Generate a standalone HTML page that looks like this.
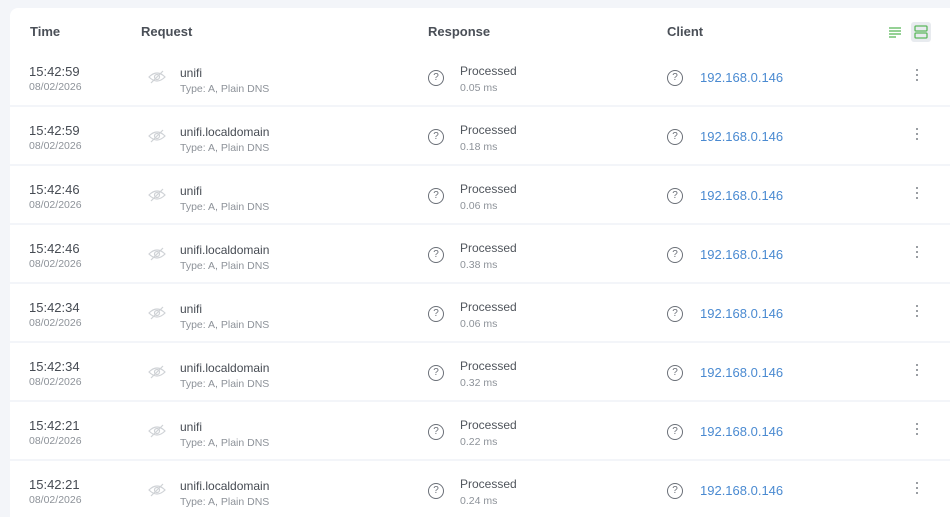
<!DOCTYPE html>
<html style="overflow:hidden"><head><style>
html,body{margin:0;width:950px;height:517px;overflow:hidden}
body{background:#f3f5f9;font-family:"Liberation Sans",sans-serif;position:relative}
.card{position:absolute;left:10px;top:8px;width:960px;height:520px;background:#f3f5f9}
.hdr{position:absolute;left:0;top:0;width:960px;height:40px;background:#fff;border-radius:8px 8px 0 0}
.h{position:absolute;top:16px;font-size:13px;font-weight:bold;color:#4a4f57}
.row{position:absolute;left:0;width:960px;height:57px;background:#fff}
.t{position:absolute;left:19px;top:16px;font-size:13px;color:#464b53}
.d{position:absolute;left:19px;top:33px;font-size:10.5px;color:#8d9299}
.eye{position:absolute;left:138px;top:22px}
.n{position:absolute;left:170px;top:18px;font-size:12px;color:#464b53}
.ty{position:absolute;left:170px;top:35px;font-size:10.5px;color:#8d9299}
.q{position:absolute;top:22px;width:14px;height:14px;border:1.3px solid #6b7078;border-radius:50%;font-size:10px;line-height:14px;text-align:center;color:#6b7078}
.p{position:absolute;left:450px;top:16px;font-size:12px;color:#50555c}
.ms{position:absolute;left:450px;top:34px;font-size:10.5px;color:#8d9299}
.ip{position:absolute;left:690px;top:22px;font-size:13px;color:#4a8ad1}
.dots{position:absolute;left:906px;top:21px;width:2px}
.dots i{display:block;width:2px;height:2px;background:#7a7f86;border-radius:1px;margin-bottom:3px}
</style></head><body>
<div class="card">
<div class="hdr">
<div class="h" style="left:20px">Time</div>
<div class="h" style="left:131px">Request</div>
<div class="h" style="left:418px">Response</div>
<div class="h" style="left:657px">Client</div>
<svg style="position:absolute;left:878px;top:18px" width="14" height="12"><g stroke="#5cb85c" stroke-width="1.3"><line x1="1" y1="2" x2="13" y2="2"/><line x1="1" y1="5" x2="13" y2="5"/><line x1="1" y1="8" x2="13" y2="8"/><line x1="1" y1="11" x2="8" y2="11"/></g></svg>
<div style="position:absolute;left:901px;top:14px;width:20px;height:20px;background:#e8ebef;border-radius:3px"><svg width="20" height="20"><g fill="none" stroke="#5cb85c" stroke-width="1.3"><rect x="4" y="4" width="12" height="5" rx="1"/><rect x="4" y="11" width="12" height="5" rx="1"/></g></svg></div>
</div>
<div id="rows"></div>
</div>
<script>
var data=[["15:42:59","unifi","0.05"],["15:42:59","unifi.localdomain","0.18"],["15:42:46","unifi","0.06"],["15:42:46","unifi.localdomain","0.38"],["15:42:34","unifi","0.06"],["15:42:34","unifi.localdomain","0.32"],["15:42:21","unifi","0.22"],["15:42:21","unifi.localdomain","0.24"]];
var h="";
data.forEach(function(r,i){
h+='<div class="row" style="top:'+(40+i*59)+'px"><div class="t">'+r[0]+'</div><div class="d">08/02/2026</div>'+
'<svg class="eye" width="18" height="14"><g fill="none" stroke="#cfd2d6" stroke-width="1.2"><path d="M1 7 Q9 -1 17 7 Q9 15 1 7Z"/><circle cx="9" cy="7" r="2.5"/><line x1="3" y1="13" x2="15" y2="1"/></g></svg>'+
'<div class="n">'+r[1]+'</div><div class="ty">Type: A, Plain DNS</div>'+
'<div class="q" style="left:418px">?</div><div class="p">Processed</div><div class="ms">'+r[2]+' ms</div>'+
'<div class="q" style="left:657px">?</div><div class="ip">192.168.0.146</div><div class="dots"><i></i><i></i><i></i></div></div>';
});
document.getElementById("rows").innerHTML=h;
</script>
</body></html>
